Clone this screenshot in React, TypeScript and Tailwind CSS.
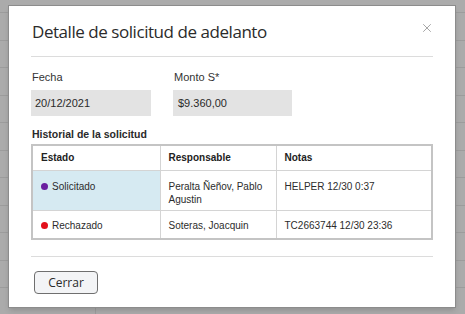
import { X } from 'lucide-react';

const rows = [
  {
    estado: 'Solicitado',
    dot: 'bg-[#6a1fa0]',
    responsable: 'Peralta Ñeñov, Pablo Agustin',
    notas: 'HELPER 12/30 0:37',
    selected: true,
  },
  {
    estado: 'Rechazado',
    dot: 'bg-[#e3101b]',
    responsable: 'Soteras, Joacquin',
    notas: 'TC2663744 12/30 23:36',
    selected: false,
  },
];

export default function App() {
  return (
    <div className="relative h-[314px] w-[465px] overflow-hidden bg-[#ababab] font-['Liberation_Sans',Arial,sans-serif]">
      {/* grid behind the modal */}
      <div className="flex flex-col pt-[12px]">
        {Array.from({ length: 11 }).map((_, i) => (
          <div key={i} className="h-[27.5px] border-t border-[#9c9c9c]" />
        ))}
      </div>
      <div className="absolute bottom-0 left-[95px] h-[8px] border-l border-[#9c9c9c]" />

      {/* modal */}
      <div className="absolute left-[8px] top-[5px] flex h-[303px] w-[448px] flex-col border border-[#8c8c8c] bg-white px-[22px] shadow-md">
        <div className="flex h-[51px] items-center justify-between border-b border-[#dcdcdc] pt-[1px]">
          <h1 className="pl-px font-['Open_Sans',sans-serif] text-[17px] leading-none tracking-[-0.45px] text-[#2b2b2b]">
            Detalle de solicitud de adelanto
          </h1>
          <X className="mr-[-1px] mt-[-7px] h-[14px] w-[14px] text-[#8a8a8a]" strokeWidth={1.3} />
        </div>

        <div className="mt-[13px] flex gap-[23px] pl-px text-[11px] text-[#333]">
          <div className="flex w-[119px] flex-col">
            <span className="leading-[14px]">Fecha</span>
            <div className="-ml-px mt-[6px] flex h-[26px] items-center bg-[#e3e3e3] px-[4px] text-[#2a2a2a]">20/12/2021</div>
          </div>
          <div className="flex w-[118px] flex-col">
            <span className="leading-[14px]">Monto S*</span>
            <div className="-ml-px mt-[6px] flex h-[26px] items-center bg-[#e3e3e3] px-[5px] text-[#2a2a2a]">$9.360,00</div>
          </div>
        </div>

        <div className="mt-[11px] pl-px text-[10.5px] font-bold leading-[14px] text-[#2a2a2a]">
          Historial de la solicitud
        </div>

        <table className="mt-[3px] w-full border-collapse border-2 border-[#c4c4c4] text-[10px] text-[#2c2c2c]">
          <thead>
            <tr className="h-[25px]">
              <th className="w-[128px] border border-[#d4d4d4] px-[8px] text-left font-bold text-[#222]">Estado</th>
              <th className="w-[116px] border border-[#d4d4d4] px-[8px] text-left font-bold text-[#222]">Responsable</th>
              <th className="border border-[#d4d4d4] px-[8px] text-left font-bold text-[#222]">Notas</th>
            </tr>
          </thead>
          <tbody>
            {rows.map((r, i) => (
              <tr key={i} className={i === 0 ? 'h-[40px]' : 'h-[29px]'}>
                <td className={`border border-[#d4d4d4] px-[8px] align-top ${r.selected ? 'bg-[#d6eaf2]' : ''} ${i === 0 ? 'pt-[9px]' : 'pt-[8px]'}`}>
                  <div className="flex items-center gap-[4px]">
                    <span className={`inline-block h-[7px] w-[7px] rounded-full ${r.dot}`} />
                    <span className="leading-[13px]">{r.estado}</span>
                  </div>
                </td>
                <td className={`border border-[#d4d4d4] px-[8px] align-top leading-[13px] ${i === 0 ? 'pt-[9px]' : 'pt-[8px]'}`}>
                  {r.responsable}
                </td>
                <td className={`border border-[#d4d4d4] px-[8px] align-top leading-[13px] ${i === 0 ? 'pt-[9px]' : 'pt-[8px]'}`}>
                  {r.notas}
                </td>
              </tr>
            ))}
          </tbody>
        </table>

        <div className="mt-[16px] border-t border-[#dcdcdc]" />

        <div className="mt-[14px] pl-[3px]">
          <button className="flex h-[23px] w-[64px] items-center justify-center rounded-[4px] border border-[#6f6f6f] bg-[#f3f4f6] font-['Open_Sans',sans-serif] text-[12px] text-[#2b2b2b]">
            Cerrar
          </button>
        </div>
      </div>
    </div>
  );
}
